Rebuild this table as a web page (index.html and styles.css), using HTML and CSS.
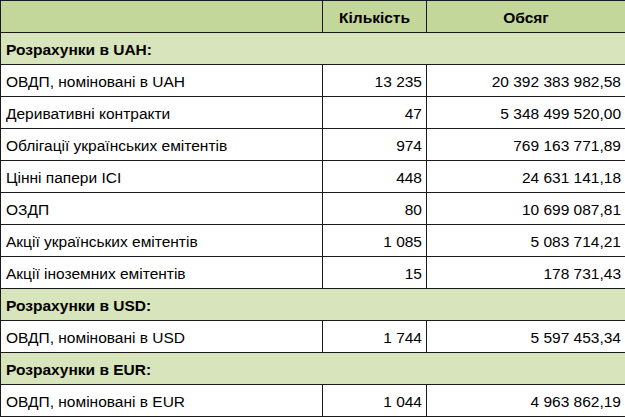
FILE: index.html
```html
<!DOCTYPE html>
<html lang="uk">
<head>
<meta charset="utf-8">
<link rel="stylesheet" href="styles.css">
</head>
<body>
<table class="grid">
  <colgroup>
    <col class="c-name">
    <col class="c-qty">
    <col class="c-vol">
  </colgroup>
  <tr class="head">
    <td></td>
    <td class="ctr">Кількість</td>
    <td class="ctr">Обсяг</td>
  </tr>
  <tr class="sect"><td colspan="3">Розрахунки в UAH:</td></tr>
  <tr><td>ОВДП, номіновані в UAH</td><td class="num">13 235</td><td class="num">20 392 383 982,58</td></tr>
  <tr><td>Деривативні контракти</td><td class="num">47</td><td class="num">5 348 499 520,00</td></tr>
  <tr><td>Облігації українських емітентів</td><td class="num">974</td><td class="num">769 163 771,89</td></tr>
  <tr><td>Цінні папери ІСІ</td><td class="num">448</td><td class="num">24 631 141,18</td></tr>
  <tr><td>ОЗДП</td><td class="num">80</td><td class="num">10 699 087,81</td></tr>
  <tr><td>Акції українських емітентів</td><td class="num">1 085</td><td class="num">5 083 714,21</td></tr>
  <tr><td>Акції іноземних емітентів</td><td class="num">15</td><td class="num">178 731,43</td></tr>
  <tr class="sect"><td colspan="3">Розрахунки в USD:</td></tr>
  <tr><td>ОВДП, номіновані в USD</td><td class="num">1 744</td><td class="num">5 597 453,34</td></tr>
  <tr class="sect"><td colspan="3">Розрахунки в EUR:</td></tr>
  <tr><td>ОВДП, номіновані в EUR</td><td class="num">1 044</td><td class="num">4 963 862,19</td></tr>
</table>
</body>
</html>
```
FILE: styles.css
```css
html, body {
  margin: 0;
  padding: 0;
  background: #ffffff;
}
.grid {
  border-collapse: collapse;
  table-layout: fixed;
  width: 625px;
  font-family: "Liberation Sans", Arial, sans-serif;
  font-size: 15.5px;
  color: #000000;
}
.c-name { width: 322px; }
.c-qty { width: 104px; }
.c-vol { width: 199px; }
.grid td {
  border: 1px solid #1a1a1a;
  height: 32px;
  padding: 0 5px 5px 5px;
  box-sizing: border-box;
  vertical-align: bottom;
  line-height: 18px;
  white-space: nowrap;
}
.grid .num { text-align: right; padding-right: 4px; }
.grid .ctr { text-align: center; }
.head td {
  background: #c4d79b;
  font-weight: bold;
}
.sect td {
  background: #d8e4bc;
  font-weight: bold;
}
```
